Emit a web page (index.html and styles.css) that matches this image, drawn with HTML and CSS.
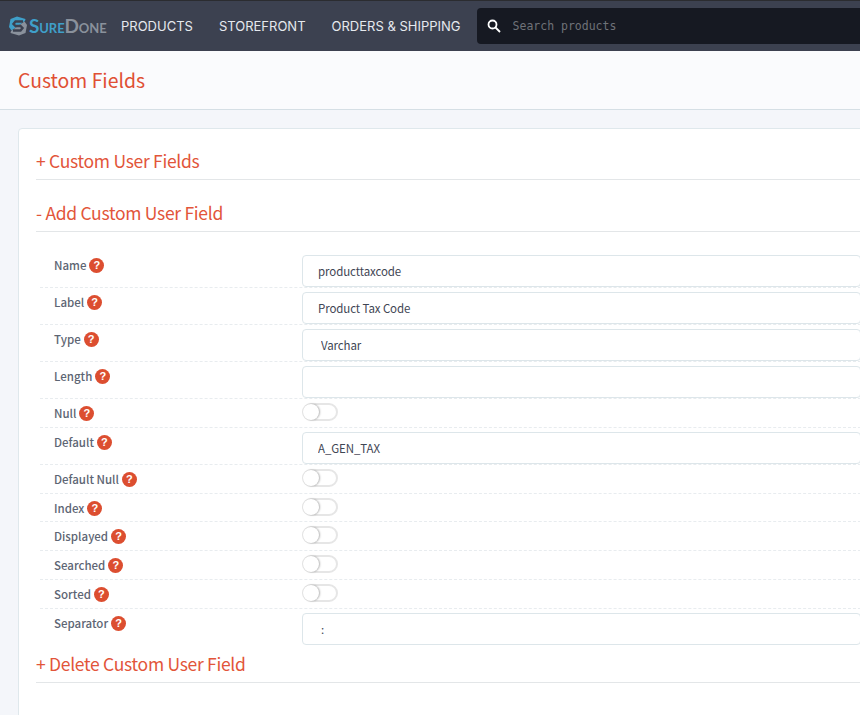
FILE: index.html
```html
<!DOCTYPE html>
<html lang="en">

<head>
    <meta charset="UTF-8" />
    <meta name="viewport" content="width=device-width, initial-scale=1.0" />
    <title>Custom Fields</title>
    <link rel="stylesheet" href="styles.css">
</head>

<body>

    <header class="topbar">
        <a class="logo" href="#">
            <svg class="logo__mark" width="18" height="20" viewBox="0 0 18 20" aria-hidden="true">
                <path fill="#3f9fc9" d="M8 0.5 L1.5 3 L0 11 L2.5 14.5 L16 5 L16.5 3 Z" />
                <path fill="#8a919c" d="M10 19.5 L16.5 17 L18 9 L15.5 5.5 L2 15 L1.5 17 Z" />
                <path fill="none" stroke="#3c4150" stroke-width="2.4" d="M14 5.5 L6.5 5.5 L4.5 8 L6.5 10 L11.5 10 L13.5 12 L11.5 14.5 L4 14.5" />
            </svg>
            <span class="logo__text"><span class="logo__sure">Sure</span><span class="logo__done">Done</span></span>
        </a>
        <nav class="topnav">
            <a class="topnav__link" href="#">PRODUCTS</a>
            <a class="topnav__link" href="#">STOREFRONT</a>
            <a class="topnav__link" href="#">ORDERS &amp; SHIPPING</a>
        </nav>
        <div class="search">
            <svg class="search__icon" width="14" height="14" viewBox="0 0 14 14" aria-hidden="true">
                <circle cx="5.5" cy="5.5" r="4" fill="none" stroke="#fff" stroke-width="1.8" />
                <path d="M8.5 8.5 L13 13" stroke="#fff" stroke-width="1.8" />
            </svg>
            <input class="search__input" type="text" placeholder="Search products">
        </div>
    </header>

    <div class="pagehead">
        <h1 class="pagehead__title">Custom Fields</h1>
    </div>

    <main class="content">
        <div class="card">
            <h2 class="card__heading">+ Custom User Fields</h2>
            <h2 class="card__heading">- Add Custom User Field</h2>

            <form class="fields">
                <div class="field">
                    <label class="field__label">Name<span class="help">?</span></label>
                    <input class="field__input" type="text" value="producttaxcode">
                </div>
                <div class="field">
                    <label class="field__label">Label<span class="help">?</span></label>
                    <input class="field__input" type="text" value="Product Tax Code">
                </div>
                <div class="field">
                    <label class="field__label">Type<span class="help">?</span></label>
                    <select class="field__input field__input--select">
                        <option>Varchar</option>
                    </select>
                </div>
                <div class="field">
                    <label class="field__label">Length<span class="help">?</span></label>
                    <input class="field__input" type="text">
                </div>
                <div class="field field--toggle">
                    <label class="field__label">Null<span class="help">?</span></label>
                    <span class="toggle"></span>
                </div>
                <div class="field">
                    <label class="field__label">Default<span class="help">?</span></label>
                    <input class="field__input" type="text" value="A_GEN_TAX">
                </div>
                <div class="field field--toggle">
                    <label class="field__label">Default Null<span class="help">?</span></label>
                    <span class="toggle"></span>
                </div>
                <div class="field field--toggle">
                    <label class="field__label">Index<span class="help">?</span></label>
                    <span class="toggle"></span>
                </div>
                <div class="field field--toggle">
                    <label class="field__label">Displayed<span class="help">?</span></label>
                    <span class="toggle"></span>
                </div>
                <div class="field field--toggle">
                    <label class="field__label">Searched<span class="help">?</span></label>
                    <span class="toggle"></span>
                </div>
                <div class="field field--toggle">
                    <label class="field__label">Sorted<span class="help">?</span></label>
                    <span class="toggle"></span>
                </div>
                <div class="field field--last">
                    <label class="field__label">Separator<span class="help">?</span></label>
                    <select class="field__input field__input--select">
                        <option>:</option>
                    </select>
                </div>
            </form>

            <h2 class="card__heading">+ Delete Custom User Field</h2>
        </div>
    </main>

</body>

</html>
```

FILE: styles.css
```css
html,
body {
    overflow-x: hidden;
}

body {
    margin: 0;
    background: #f4f6fa;
    color: #5d6573;
    font-family: "Noto Sans CJK SC", "Open Sans", sans-serif;
    font-size: 11.5px;
}

.topbar {
    height: 50px;
    display: flex;
    align-items: center;
    background: #3c4150;
    border-top: 1px solid #2b2c30;
}

.logo {
    display: flex;
    align-items: center;
    margin-left: 9px;
    width: 112px;
    text-decoration: none;
}

.logo__text {
    margin-left: 2px;
    font-family: "Lato", sans-serif;
    font-size: 19px;
    font-weight: 700;
    font-variant: small-caps;
    line-height: 20px;
    letter-spacing: -0.1px;
}

.logo__sure {
    color: #3f9fc9;
}

.logo__done {
    color: #8a919c;
}

.topnav {
    display: flex;
    gap: 26px;
}

.topnav__link {
    color: #e6e9ee;
    font-family: "Inter", sans-serif;
    font-size: 13px;
    text-decoration: none;
}

.search {
    flex: 1;
    height: 36px;
    display: flex;
    align-items: center;
    margin-left: 16px;
    padding-left: 10px;
    background: #161922;
    border-radius: 4px 0 0 4px;
}

.search__icon {
    flex: none;
}

.search__input {
    flex: 1;
    margin-left: 12px;
    padding: 0;
    border: 0;
    outline: 0;
    background: transparent;
    color: #fff;
    font-family: "DejaVu Sans Mono", monospace;
    font-size: 11.5px;
}

.search__input::placeholder {
    color: #6f7278;
    opacity: 1;
}

.pagehead {
    height: 58px;
    display: flex;
    align-items: center;
    padding-left: 18px;
    background: #fafbfd;
    border-bottom: 1px solid #d5dfe5;
}

.pagehead__title {
    margin: 0;
    color: #e04f33;
    font-size: 19.4px;
    font-weight: 400;
    line-height: 30px;
}

.content {
    padding: 18px 0 0 18px;
}

.card {
    height: 600px;
    margin-right: -20px;
    padding: 14px 18px 0 17px;
    background: #fff;
    border: 1px solid #dfe8ec;
    border-radius: 4px;
}

.card__heading {
    height: 36px;
    margin: 0 0 15px;
    color: #e2553a;
    font-size: 17.5px;
    font-weight: 400;
    letter-spacing: -0.3px;
    line-height: 35px;
    border-bottom: 1px solid #e3e6e8;
}

.fields {
    margin: 19px 0 0 4px;
}

.field {
    display: flex;
    align-items: flex-start;
    box-sizing: border-box;
    height: 37px;
    padding: 4px 0 0 14px;
    border-bottom: 1px dashed #e8ecef;
}

.field--toggle {
    height: 28.8px;
}

.field--last {
    border-bottom: 0;
}

.field__label {
    flex: none;
    width: 248px;
    margin-top: 1px;
    font-weight: 500;
    line-height: 18px;
}

.help {
    display: inline-block;
    width: 15px;
    height: 15px;
    margin-top: 2px;
    margin-left: 3px;
    border-radius: 50%;
    background: #dc4e30;
    color: #fff;
    font-family: "Liberation Sans", sans-serif;
    font-size: 11px;
    font-weight: 700;
    line-height: 15px;
    text-align: center;
    vertical-align: top;
}

.field__input {
    flex: 1;
    box-sizing: border-box;
    height: 32px;
    min-width: 0;
    padding: 0 15px;
    background: #fff;
    border: 1px solid #dde6ea;
    border-radius: 4px;
    outline: 0;
    color: #3f4654;
    font-family: inherit;
    font-size: 11.5px;
    letter-spacing: -0.1px;
}

.field__input--select {
    padding-left: 18px;
    appearance: none;
}

.toggle {
    position: relative;
    box-sizing: border-box;
    width: 36px;
    height: 18px;
    background: #fff;
    border: 2px solid #e6e6e6;
    border-radius: 9px;
}

.toggle::before {
    content: "";
    position: absolute;
    top: -1px;
    left: -1px;
    width: 16px;
    height: 16px;
    background: #fff;
    border-radius: 50%;
    box-shadow: 1px 0 2px rgba(0, 0, 0, 0.3);
}
```
